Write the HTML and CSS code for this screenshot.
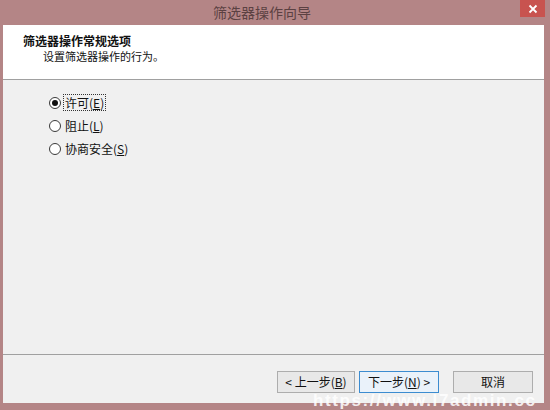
FILE: index.html
```html
<!DOCTYPE html>
<html>
<head>
<meta charset="utf-8">
<link rel="stylesheet" href="styles.css">
</head>
<body>
<div class="window">
  <div class="titlebar">
    <span class="title">筛选器操作向导</span>
    <div class="close"><svg width="10" height="10" viewBox="0 0 10 10"><path d="M1.5 1.5 L8.5 8.5 M8.5 1.5 L1.5 8.5" stroke="#fff" stroke-width="1.8"/></svg></div>
  </div>
  <div class="client">
    <div class="header">
      <div class="h-title">筛选器操作常规选项</div>
      <div class="h-sub">设置筛选器操作的行为。</div>
    </div>
    <div class="content">
      <label class="radio-row"><span class="radio checked"></span><span class="label focus">许可(<u>E</u>)</span></label>
      <label class="radio-row"><span class="radio"></span><span class="label">阻止(<u>L</u>)</span></label>
      <label class="radio-row"><span class="radio"></span><span class="label">协商安全(<u>S</u>)</span></label>
    </div>
    <div class="footer">
      <button class="btn">&lt; 上一步(<u>B</u>)</button>
      <button class="btn default">下一步(<u>N</u>) &gt;</button>
      <button class="btn cancel">取消</button>
    </div>
  </div>
  <div class="watermark">https://www.l7admin.cc</div>
</div>
</body>
</html>
```
FILE: styles.css
```css
html, body {
  margin: 0;
  padding: 0;
}
body {
  background: #b48586;
  font-family: "Noto Sans CJK SC", "Liberation Sans", sans-serif;
  font-size: 12px;
  color: #111;
}
.window {
  position: relative;
  width: 550px;
  height: 410px;
  overflow: hidden;
  background: #b48586;
}
.titlebar {
  position: relative;
  height: 25px;
  display: flex;
  justify-content: center;
  align-items: center;
}
.title {
  font-size: 14px;
  color: #5b4142;
  margin-right: 26px;
  line-height: 25px;
}
.close {
  position: absolute;
  right: 5px;
  top: 0;
  width: 25px;
  height: 17px;
  background: #c8534f;
  display: flex;
  align-items: center;
  justify-content: center;
}
.client {
  margin: 0 6px 0 3px;
  height: 378px;
  background: #f0f0f0;
  display: flex;
  flex-direction: column;
}
.header {
  background: #fff;
  height: 54px;
  border-bottom: 1px solid #a0a0a0;
  box-sizing: content-box;
  padding-left: 20px;
}
.h-title {
  font-weight: bold;
  font-size: 12px;
  line-height: 16px;
  margin-top: 8px;
}
.h-sub {
  font-size: 11px;
  line-height: 14px;
  padding-left: 20px;
}
.content {
  flex: 1;
  padding: 11px 0 0 46px;
  display: flex;
  flex-direction: column;
}
.radio-row {
  display: flex;
  align-items: center;
  height: 23px;
  flex: none;
}
.radio {
  width: 12px;
  height: 12px;
  border: 1px solid #3a3a3a;
  border-radius: 50%;
  background: #fff;
  box-sizing: border-box;
  margin-right: 2px;
  display: flex;
  align-items: center;
  justify-content: center;
}
.radio.checked::after {
  content: "";
  width: 6px;
  height: 6px;
  border-radius: 50%;
  background: #111;
}
.label {
  font-size: 12px;
  line-height: 15px;
  padding: 0 1px;
  border: 1px dotted transparent;
}
.label.focus {
  border-color: #333;
}
.footer {
  height: 49px;
  border-top: 1px solid #a0a0a0;
  display: flex;
  align-items: flex-start;
  padding: 16px 0 0 274px;
  box-sizing: border-box;
}
.btn {
  width: 78px;
  height: 22px;
  border: 1px solid #adadad;
  background: #e8e8e8;
  font-family: "Noto Sans CJK SC", "Liberation Sans", sans-serif;
  font-size: 12px;
  color: #111;
  padding: 0;
  margin: 0;
  line-height: 18px;
}
.btn.default {
  border-color: #3c8cd0;
  background: #eaf2fa;
  margin-left: 4px;
  width: 80px;
}
.btn.cancel {
  margin-left: 14px;
  width: 80px;
}
.watermark {
  position: absolute;
  left: 313px;
  top: 392px;
  line-height: 17px;
  font-family: "Liberation Sans", sans-serif;
  font-weight: bold;
  font-size: 17px;
  letter-spacing: 1.6px;
  color: rgba(255, 255, 255, 0.85);
  white-space: nowrap;
}
```
